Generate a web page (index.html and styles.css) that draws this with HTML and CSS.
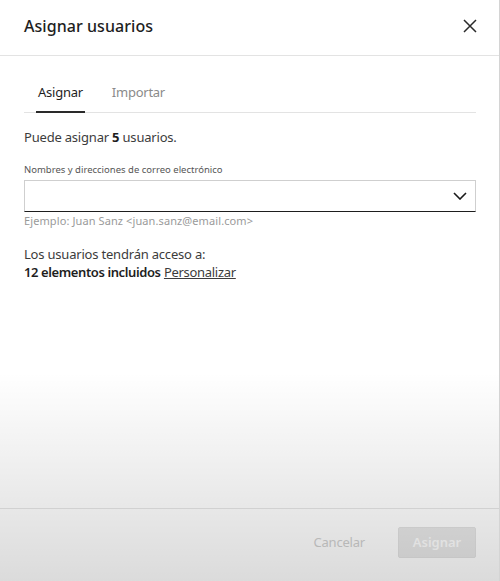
FILE: index.html
```html
<!DOCTYPE html>
<html lang="es">
<head>
<meta charset="utf-8">
<title>Asignar usuarios</title>
<link rel="stylesheet" href="styles.css">
</head>
<body>
<div class="dialog">
  <header class="header">
    <h1 class="title">Asignar usuarios</h1>
    <button class="close" aria-label="Cerrar">
      <svg width="14" height="14" viewBox="0 0 14 14"><path d="M1 1L13 13M13 1L1 13" stroke="#2a2a2a" stroke-width="1.5" fill="none"/></svg>
    </button>
  </header>
  <main class="content">
    <nav class="tabs">
      <span class="tab active">Asignar</span>
      <span class="tab">Importar</span>
    </nav>
    <p class="info">Puede asignar <b>5</b> usuarios.</p>
    <label class="label">Nombres y direcciones de correo electrónico</label>
    <div class="input">
      <svg width="14" height="8" viewBox="0 0 14 8"><path d="M1 1L7 7L13 1" stroke="#1a1a1a" stroke-width="1.6" fill="none"/></svg>
    </div>
    <p class="hint">Ejemplo: Juan Sanz &lt;juan.sanz@email.com&gt;</p>
    <p class="access">Los usuarios tendrán acceso a:</p>
    <p class="included"><b>12 elementos incluidos</b> <a class="link">Personalizar</a></p>
  </main>
  <footer class="footer">
    <button class="cancel">Cancelar</button>
    <button class="primary">Asignar</button>
  </footer>
  <div class="overlay"></div>
</div>
</body>
</html>
```
FILE: styles.css
```css
html, body {
  margin: 0;
  padding: 0;
  background: #fff;
}
body {
  font-family: "Noto Sans", "Open Sans", sans-serif;
  color: #3c3c3c;
}
.dialog {
  position: relative;
  width: 499px;
  height: 581px;
  border-right: 1px solid #d4d4d4;
  display: flex;
  flex-direction: column;
  overflow: hidden;
}
.header {
  height: 56px;
  box-sizing: border-box;
  border-bottom: 1px solid #e3e3e3;
  padding: 0 21px 4px 24px;
  display: flex;
  align-items: center;
  justify-content: space-between;
}
.title {
  margin: 0;
  font-size: 16px;
  font-weight: 500;
  color: #1e1e1e;
  letter-spacing: 0.05px;
}
.close {
  border: 0;
  background: none;
  padding: 0;
  width: 16px;
  height: 16px;
  display: flex;
  align-items: center;
  justify-content: center;
}
.content {
  flex: 1;
  padding: 21px 23px 0 24px;
}
.tabs {
  display: flex;
  gap: 25px;
  padding-left: 12px;
  border-bottom: 1px solid #e3e3e3;
}
.tab {
  font-size: 13px;
  line-height: 20px;
  padding: 5px 2px 9px;
  color: #8a8a8a;
  letter-spacing: -0.25px;
  border-bottom: 2px solid transparent;
  margin-bottom: -1px;
}
.tab.active {
  color: #1e1e1e;
  border-bottom-color: #2a2a2a;
}
.info {
  margin: 14px 0 0;
  font-size: 13px;
  line-height: 20px;
  letter-spacing: -0.2px;
  color: #3c3c3c;
}
.info b {
  font-weight: 700;
  color: #1e1e1e;
}
.label {
  display: block;
  margin-top: 15px;
  font-size: 9.5px;
  line-height: 16px;
  color: #555;
}
.input {
  margin-top: 2px;
  height: 32px;
  box-sizing: border-box;
  border: 1px solid #cfcfcf;
  border-bottom: 1px solid #1e1e1e;
  display: flex;
  align-items: center;
  justify-content: flex-end;
  padding-right: 8px;
}
.hint {
  margin: 1px 0 0;
  font-size: 11px;
  line-height: 16px;
  letter-spacing: 0.1px;
  color: #9a9a9a;
}
.access {
  margin: 16px 0 0;
  font-size: 13px;
  line-height: 18px;
  letter-spacing: -0.2px;
  color: #3c3c3c;
}
.included {
  margin: 0;
  font-size: 13px;
  line-height: 18px;
  color: #3c3c3c;
}
.included b {
  font-weight: 600;
  letter-spacing: -0.4px;
  color: #1e1e1e;
}
.link {
  text-decoration: underline;
  letter-spacing: -0.3px;
  color: #3c3c3c;
}
.footer {
  height: 73px;
  box-sizing: border-box;
  border-top: 1px solid #e6e6e6;
  padding: 0 23px 6px;
  display: flex;
  align-items: center;
  justify-content: flex-end;
  gap: 33px;
}
.cancel {
  border: 0;
  background: none;
  padding: 0;
  font-family: inherit;
  font-size: 13px;
  font-weight: 400;
  letter-spacing: -0.2px;
  color: #d0d0d0;
}
.primary {
  width: 78px;
  height: 31px;
  border: 1px solid #e2e2e2;
  border-radius: 2px;
  background: #e8e8e8;
  font-family: inherit;
  font-size: 13px;
  font-weight: 600;
  color: #ffffff;
}
.overlay {
  position: absolute;
  inset: 0;
  pointer-events: none;
  background: linear-gradient(to bottom, rgba(0,0,0,0) 64%, rgba(0,0,0,0.14) 100%);
}
```
